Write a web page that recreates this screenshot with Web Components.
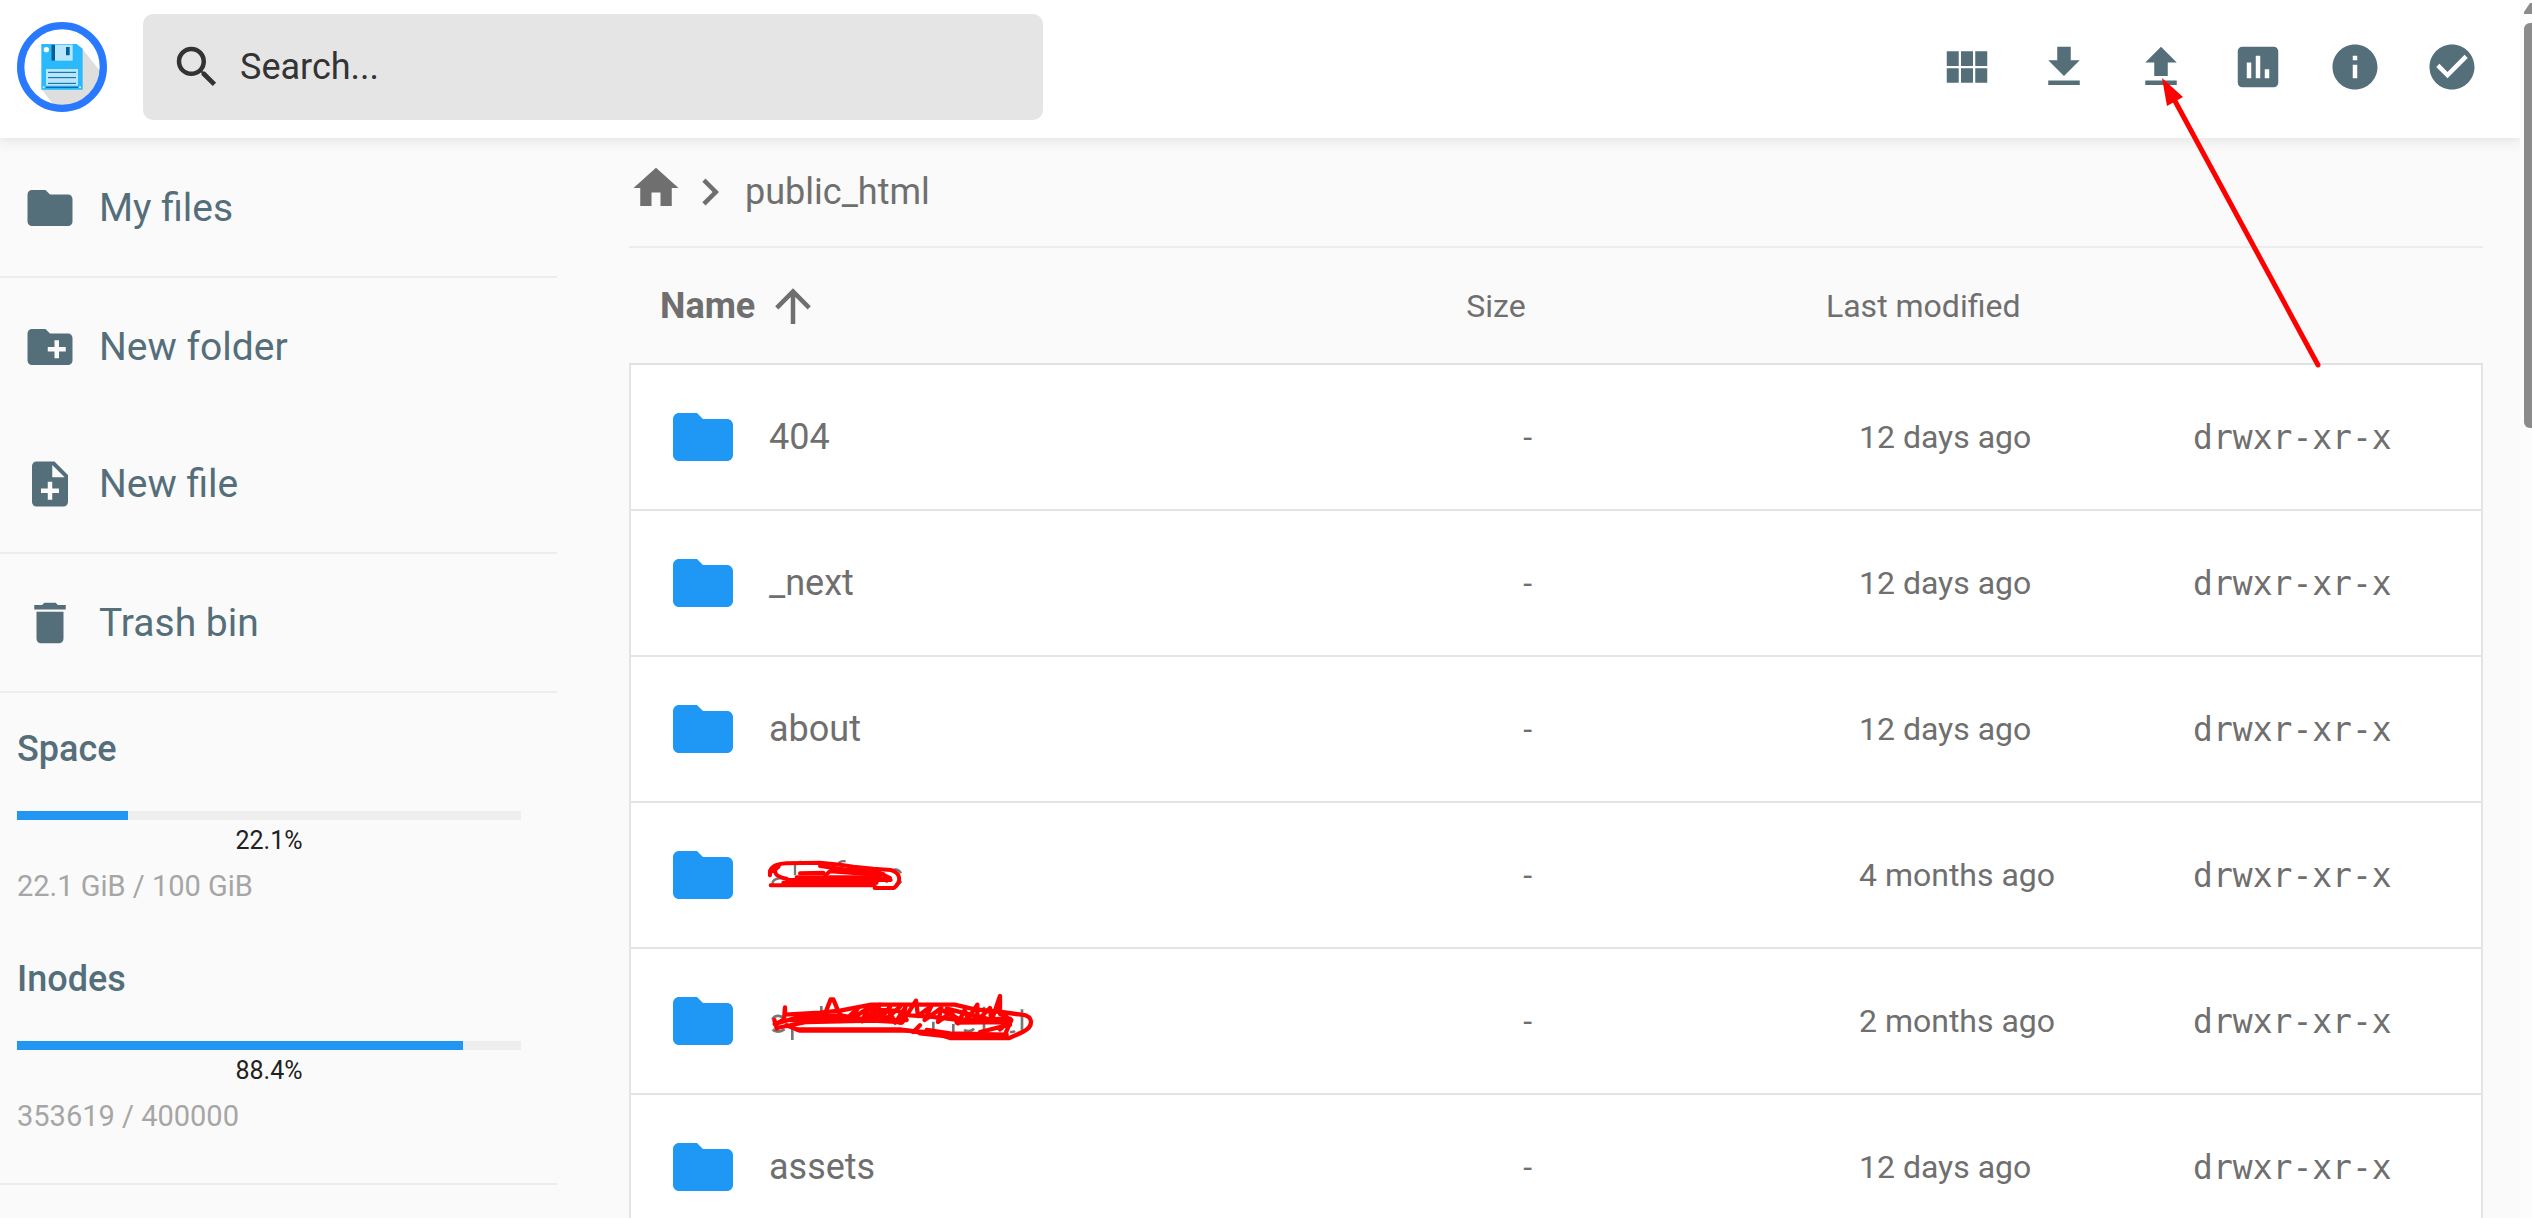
<!DOCTYPE html>
<html lang="en">
<head>
<meta charset="utf-8">
<meta name="viewport" content="width=device-width, initial-scale=1">
<title>File manager</title>
<style>
  body {
    margin: 0;
    background: #fafafa;
    font-family: Roboto, sans-serif;
    overflow: hidden;
  }
</style>
</head>
<body>
<file-manager></file-manager>

<script>
const ICONS = {
  search: 'M15.5 14h-.79l-.28-.27A6.471 6.471 0 0 0 16 9.5 6.5 6.5 0 1 0 9.5 16c1.61 0 3.09-.59 4.23-1.57l.27.28v.79l5 4.99L20.49 19l-4.99-5zm-6 0C7.01 14 5 11.99 5 9.5S7.01 5 9.5 5 14 7.01 14 9.5 11.99 14 9.5 14z',
  grid: 'M3 5h5.33v6.5H3zM9.33 5h5.34v6.5H9.33zM15.67 5H21v6.5h-5.33zM3 12.5h5.33V19H3zM9.33 12.5h5.34V19H9.33zM15.67 12.5H21V19h-5.33z',
  download: 'M5 20h14v-2H5v2zM19 9h-4V3H9v6H5l7 7 7-7z',
  upload: 'M9 16h6v-6h4l-7-7-7 7h4v6zm-4 2h14v2H5v-2z',
  chart: 'M19 3H5c-1.1 0-2 .9-2 2v14c0 1.1.9 2 2 2h14c1.1 0 2-.9 2-2V5c0-1.1-.9-2-2-2zM9 17H7v-7h2v7zm4 0h-2V7h2v10zm4 0h-2v-4h2v4z',
  info: 'M12 2C6.48 2 2 6.48 2 12s4.48 10 10 10 10-4.48 10-10S17.52 2 12 2zm1 15h-2v-6h2v6zm0-8h-2V7h2v2z',
  check: 'M12 2C6.48 2 2 6.48 2 12s4.48 10 10 10 10-4.48 10-10S17.52 2 12 2zm-2 15l-5-5 1.41-1.41L10 14.17l7.59-7.59L19 8l-9 9z',
  folder: 'M10 4H4c-1.1 0-1.99.9-1.99 2L2 18c0 1.1.9 2 2 2h16c1.1 0 2-.9 2-2V8c0-1.1-.9-2-2-2h-8l-2-2z',
  newFolder: 'M20 6h-8l-2-2H4c-1.11 0-1.99.89-1.99 2L2 18c0 1.11.89 2 2 2h16c1.11 0 2-.89 2-2V8c0-1.11-.89-2-2-2zm-1 8h-3v3h-2v-3h-3v-2h3V9h2v3h3v2z',
  newFile: 'M14 2H6c-1.1 0-1.99.9-1.99 2L4 20c0 1.1.89 2 1.99 2H18c1.1 0 2-.9 2-2V8l-6-6zm2 14h-3v3h-2v-3H8v-2h3v-3h2v3h3v2zm-3-7V3.5L18.5 9H13z',
  trash: 'M6 19c0 1.1.9 2 2 2h8c1.1 0 2-.9 2-2V7H6v12zM19 4h-3.5l-1-1h-5l-1 1H5v2h14V4z',
  home: 'M10 20v-6h4v6h5v-8h3L12 3 2 12h3v8h5z',
  chevron: 'M8.59 16.59L13.17 12 8.59 7.41 10 6l6 6-6 6-1.41-1.41z',
  arrowUp: 'M13 20h-2V8l-5.5 5.5-1.42-1.42L12 4.16l7.92 7.92-1.42 1.42L13 8v12z'
};

class FmIcon extends HTMLElement {
  connectedCallback() {
    this.attachShadow({ mode: 'open' }).innerHTML = `
      <style>
        :host { display: block; flex: none; width: var(--icon-size, 54px); height: var(--icon-size, 54px); }
        svg { display: block; width: 100%; height: 100%; fill: currentColor; }
      </style>
      <svg viewBox="0 0 24 24" aria-hidden="true"><path d="${ICONS[this.getAttribute('name')]}"/></svg>
    `;
  }
}

class FmLogo extends HTMLElement {
  connectedCallback() {
    this.attachShadow({ mode: 'open' }).innerHTML = `
      <style>
        :host { display: block; flex: none; width: 90px; height: 90px; }
        svg { display: block; }
      </style>
      <svg width="90" height="90" viewBox="51 66 270 270" aria-hidden="true">
        <clipPath id="disc"><circle cx="186" cy="201" r="116"/></clipPath>
        <circle cx="186" cy="201" r="124" fill="#fff"/>
        <path d="M247 146l60 76-10 110H174l-48-63z" fill="#dedede" clip-path="url(#disc)"/>
        <path d="M124 132h106l18 14v123H124z" fill="#2bb9fd"/>
        <path d="M154 134h64v48h-64z" fill="#b8e7fd"/>
        <path d="M154 134h11v48h-11zM198 141h11v25h-11z" fill="#01609a"/>
        <circle cx="139" cy="149" r="8" fill="#fff"/>
        <path d="M138 207h96v50h-96z" fill="#b8e7fd"/>
        <path d="M144 217h84M144 233h84M144 250h84M138 262h96" stroke="#01609a" stroke-width="3"/>
        <circle cx="131" cy="262" r="3" fill="#e1f5fe"/>
        <circle cx="240" cy="262" r="3" fill="#e1f5fe"/>
        <circle cx="186" cy="201" r="124" fill="none" stroke="#2979ff" stroke-width="22"/>
      </svg>
    `;
  }
}

class FmHeader extends HTMLElement {
  connectedCallback() {
    this.attachShadow({ mode: 'open' }).innerHTML = `
      <style>
        :host {
          display: flex;
          align-items: center;
          gap: 36px;
          box-sizing: border-box;
          height: 138px;
          padding: 0 20px 4px 17px;
          background: #fff;
          box-shadow: 0 0 14px 2px rgba(0, 0, 0, 0.1);
          position: relative;
          z-index: 1;
        }
        label {
          display: flex;
          align-items: center;
          gap: 16px;
          flex: 0 1 900px;
          box-sizing: border-box;
          height: 106px;
          padding: 0 27px;
          border-radius: 10px;
          background: #e5e5e5;
          color: #333;
        }
        input {
          flex: 1;
          min-width: 0;
          padding: 0;
          border: 0;
          outline: 0;
          background: none;
          font: 36px Roboto, sans-serif;
          color: inherit;
        }
        input::placeholder { color: #333; opacity: 1; }
        nav { display: flex; margin-left: auto; }
        button {
          display: flex;
          justify-content: center;
          align-items: center;
          width: 97px;
          height: 97px;
          padding: 0;
          border: 0;
          background: none;
          color: #546e7a;
          cursor: pointer;
        }
      </style>
      <fm-logo></fm-logo>
      <label>
        <fm-icon name="search"></fm-icon>
        <input type="text" placeholder="Search..." aria-label="Search">
      </label>
      <nav>
        <button aria-label="Switch view"><fm-icon name="grid"></fm-icon></button>
        <button aria-label="Download"><fm-icon name="download"></fm-icon></button>
        <button aria-label="Upload"><fm-icon name="upload"></fm-icon></button>
        <button aria-label="Disk usage"><fm-icon name="chart"></fm-icon></button>
        <button aria-label="Info"><fm-icon name="info"></fm-icon></button>
        <button aria-label="Select"><fm-icon name="check"></fm-icon></button>
      </nav>
    `;
  }
}

class FmNavItem extends HTMLElement {
  connectedCallback() {
    this.attachShadow({ mode: 'open' }).innerHTML = `
      <style>
        :host { display: block; }
        button {
          display: flex;
          align-items: center;
          gap: 22px;
          width: 100%;
          height: 137px;
          padding: 0 23px;
          border: 0;
          background: none;
          color: #546e7a;
          font: 39px Roboto, sans-serif;
          text-align: left;
          cursor: pointer;
        }
      </style>
      <button><fm-icon name="${this.getAttribute('icon')}"></fm-icon><slot></slot></button>
    `;
  }
}

class FmUsage extends HTMLElement {
  connectedCallback() {
    const percent = this.getAttribute('percent');
    this.attachShadow({ mode: 'open' }).innerHTML = `
      <style>
        :host { display: block; }
        label {
          display: block;
          color: #546e7a;
          font-size: 36px;
          font-weight: 500;
          line-height: 44px;
        }
        progress {
          display: block;
          appearance: none;
          width: 100%;
          height: 9px;
          margin-top: 40px;
          border: 0;
          background: #eee;
        }
        progress::-webkit-progress-bar { background: #eee; }
        progress::-webkit-progress-value { background: #2196f3; }
        .percent { color: #212121; font-size: 25px; line-height: 42px; text-align: center; }
        .detail { color: #a6a6a6; font-size: 29px; line-height: 48px; }
      </style>
      <label for="bar">${this.getAttribute('label')}</label>
      <progress id="bar" max="100" value="${percent}"></progress>
      <div class="percent">${percent}%</div>
      <div class="detail"><slot></slot></div>
    `;
  }
}

class FmSidebar extends HTMLElement {
  connectedCallback() {
    this.attachShadow({ mode: 'open' }).innerHTML = `
      <style>
        :host { display: block; padding-top: 1px; }
        section { border-bottom: 2px solid #ededed; }
        .usage { display: grid; gap: 47px; padding: 34px 36px 43px 17px; }
      </style>
      <section><fm-nav-item icon="folder">My files</fm-nav-item></section>
      <section>
        <fm-nav-item icon="newFolder">New folder</fm-nav-item>
        <fm-nav-item icon="newFile">New file</fm-nav-item>
      </section>
      <section><fm-nav-item icon="trash">Trash bin</fm-nav-item></section>
      <section class="usage">
        <fm-usage label="Space" percent="22.1">22.1 GiB / 100 GiB</fm-usage>
        <fm-usage label="Inodes" percent="88.4">353619 / 400000</fm-usage>
      </section>
    `;
  }
}

class FmBreadcrumb extends HTMLElement {
  connectedCallback() {
    this.attachShadow({ mode: 'open' }).innerHTML = `
      <style>
        :host {
          display: flex;
          align-items: center;
          height: 108px;
          border-bottom: 2px solid #ededed;
          color: #6f6f6f;
          font-size: 36px;
        }
        a { color: inherit; text-decoration: none; }
        .home { margin-bottom: 8px; }
        .current { margin-left: 8px; }
      </style>
      <a class="home" href="#home" aria-label="Home"><fm-icon name="home"></fm-icon></a>
      <fm-icon name="chevron"></fm-icon>
      <a class="current" href="#public_html">public_html</a>
    `;
  }
}

// Pen strokes laid over the names that are kept private
const SCRIBBLES = {
  short: `
    <svg width="135" height="36" viewBox="87 51 405 108" aria-hidden="true">
      <g fill="none" stroke="#777" stroke-width="7">
        <path d="M97 132c0-12 10-17 28-18M165 66v40M181 62v6M296 70c4-6 10-8 21-6M458 90c12-4 20 0 25 10M465 133c10 0 16-3 19-9"/>
      </g>
      <g fill="none" stroke="#f00" stroke-width="12" stroke-linecap="round" stroke-linejoin="round">
        <path d="M92 136h312M130 128h280M142 120h310M170 112h250"/>
        <path d="M90 106c-4-24 14-34 50-36l100-2 60 6 40 6 60 6 52 4c30 8 34 34 10 54h-58"/>
        <path d="M90 98l26-18c-20 12-12 30 24 36M180 100l70-2M240 78l70 10 60 8 60 6M256 106l14-12 110 8 60 18M330 84l80 10 40 20M380 98l60 24"/>
      </g>
    </svg>`,
  long: `
    <svg width="263" height="52" viewBox="87 465 789 156" aria-hidden="true">
      <g fill="none" stroke="#777" stroke-width="8">
        <path d="M97 538c6-12 24-14 32-4M98 568c8 10 22 8 36 0M157 560v40M244 498v30M390 516v30M580 545v28M640 552v24M732 500v75M846 508v66M672 570c10 6 24 4 30-4M810 575c6 2 12 0 15-2"/>
      </g>
      <g fill="none" stroke="#f00" stroke-width="13" stroke-linecap="round" stroke-linejoin="round">
        <path d="M103 540l8 26M112 550l20-12 3-36v22l105-6 60-6 94-18h250l60 14 80 8 60 8c38 2 38 36 4 52l-40 18H630l-50-16-80-6H180l-40-16"/>
        <path d="M104 552l76-22 120-4 100 16 100-2M110 564l90-18 200-4 80 4M150 540h260M170 568h310l90 14 230 8M540 580l90 10h170M560 570l70 10 170 4M640 584h160"/>
        <path d="M254 524l18-46h8l14 34 20 30 40-38-20 34 50-34-18 40 50-44-20 38 50-26 20 36 30-46-10 46 42-66 6 46 40-30-20 42 50-36-10 42 40-30 20 34 20-40 10 26 28-42v48l38-38 4 40 26-76v54l20 8"/>
        <path d="M390 496l-20 44M420 494l-30 46M450 500l-30 40M480 500l-40 36M380 508l90 4 40 14 60 4 90 10 150-4M400 500l30 30 50 18M640 538l170 4M650 548l160-2M780 568l34-28-20 46M720 576l90-22M540 556l-20 20M620 506l120 30M600 508l60 30"/>
      </g>
    </svg>`
};

class FmTable extends HTMLElement {
  constructor() {
    super();
    this.attachShadow({ mode: 'open' });
    this.files = [
      { name: '404', modified: '12 days ago' },
      { name: '_next', modified: '12 days ago' },
      { name: 'about', modified: '12 days ago' },
      { scribble: 'short', modified: '4 months ago' },
      { scribble: 'long', modified: '2 months ago' },
      { name: 'assets', modified: '12 days ago' }
    ];
  }

  connectedCallback() {
    this.shadowRoot.innerHTML = `
      <style>
        :host { display: block; color: #6f6f6f; font-size: 32px; }
        table { width: 100%; table-layout: fixed; border-collapse: separate; border-spacing: 0; }
        th { height: 115px; padding: 0; font-weight: 400; text-align: left; }
        th:nth-child(1) { width: 45%; }
        th:nth-child(2) { width: 19.4%; }
        th:nth-child(3) { width: 19.8%; }
        th.size { padding-left: 3px; }
        button {
          display: flex;
          align-items: center;
          gap: 11px;
          padding: 0 0 0 31px;
          border: 0;
          background: none;
          color: inherit;
          font: 700 36px Roboto, sans-serif;
          cursor: pointer;
        }
        td { height: 144px; padding: 0; background: #fff; border-bottom: 2px solid #e4e4e4; }
        tr:first-child td { border-top: 2px solid #e0e0e0; }
        td:first-child { border-left: 2px solid #e4e4e4; }
        td:last-child { border-right: 2px solid #e4e4e4; }
        a {
          display: flex;
          align-items: center;
          gap: 30px;
          padding-left: 36px;
          color: inherit;
          font-size: 36px;
          text-decoration: none;
        }
        a fm-icon { --icon-size: 72px; color: #1e98f4; }
        a svg { display: block; overflow: visible; }
        td.size { padding-left: 60px; }
        td.modified { padding-left: 33px; }
        .mode { font: 33px "DejaVu Sans Mono", monospace; }
      </style>
      <table>
        <thead>
          <tr>
            <th scope="col"><button>Name<fm-icon name="arrowUp"></fm-icon></button></th>
            <th scope="col" class="size">Size</th>
            <th scope="col">Last modified</th>
            <th scope="col" aria-label="Permissions"></th>
          </tr>
        </thead>
        <tbody>${this.files.map((file) => this.renderRow(file)).join('')}</tbody>
      </table>
    `;
  }

  renderRow(file) {
    return `
      <tr>
        <td><a href="#open"><fm-icon name="folder"></fm-icon>${file.name || SCRIBBLES[file.scribble]}</a></td>
        <td class="size">-</td>
        <td class="modified">${file.modified}</td>
        <td class="mode">drwxr-xr-x</td>
      </tr>
    `;
  }
}

class FmScrollbar extends HTMLElement {
  connectedCallback() {
    this.attachShadow({ mode: 'open' }).innerHTML = `
      <style>
        :host {
          display: flex;
          flex-direction: column;
          align-items: flex-end;
          gap: 9px;
          padding-top: 3px;
          background: #fcfcfc;
          overflow: hidden;
          position: relative;
          z-index: 2;
        }
        svg { display: block; }
        .thumb { width: 8px; height: 33.3%; border-radius: 6px 0 0 6px; background: #8b8b8b; }
      </style>
      <svg width="8" height="11" viewBox="0 0 8 11" aria-hidden="true"><path d="M8 0H6L0 9v2h8z" fill="#8b8b8b"/></svg>
      <div class="thumb"></div>
    `;
  }
}

class FmPointer extends HTMLElement {
  connectedCallback() {
    this.attachShadow({ mode: 'open' }).innerHTML = `
      <style>
        :host { display: block; pointer-events: none; }
        svg { display: block; }
      </style>
      <svg width="170" height="300" viewBox="0 0 170 300" aria-hidden="true">
        <path d="M23 29l143 264" stroke="#f00" stroke-width="5" stroke-linecap="round"/>
        <path d="M10 6l21 19-16 9z" fill="#f00"/>
      </svg>
    `;
  }
}

class FileManager extends HTMLElement {
  connectedCallback() {
    this.attachShadow({ mode: 'open' }).innerHTML = `
      <style>
        :host { display: grid; grid-template: 100% / 1fr 12px; height: 100vh; overflow: hidden; }
        .page { position: relative; min-width: 0; }
        .body { display: grid; grid-template-columns: 557px 1fr; column-gap: 72px; padding-right: 37px; }
        main { min-width: 0; }
        /* the arrow follows the upload button, which is held to the right edge */
        fm-pointer { position: absolute; top: 72px; right: 198px; z-index: 3; }
      </style>
      <div class="page">
        <fm-header></fm-header>
        <div class="body">
          <fm-sidebar></fm-sidebar>
          <main>
            <fm-breadcrumb></fm-breadcrumb>
            <fm-table></fm-table>
          </main>
        </div>
        <fm-pointer></fm-pointer>
      </div>
      <fm-scrollbar></fm-scrollbar>
    `;
  }
}

customElements.define('fm-icon', FmIcon);
customElements.define('fm-logo', FmLogo);
customElements.define('fm-header', FmHeader);
customElements.define('fm-nav-item', FmNavItem);
customElements.define('fm-usage', FmUsage);
customElements.define('fm-sidebar', FmSidebar);
customElements.define('fm-breadcrumb', FmBreadcrumb);
customElements.define('fm-table', FmTable);
customElements.define('fm-scrollbar', FmScrollbar);
customElements.define('fm-pointer', FmPointer);
customElements.define('file-manager', FileManager);
</script>
</body>
</html>
